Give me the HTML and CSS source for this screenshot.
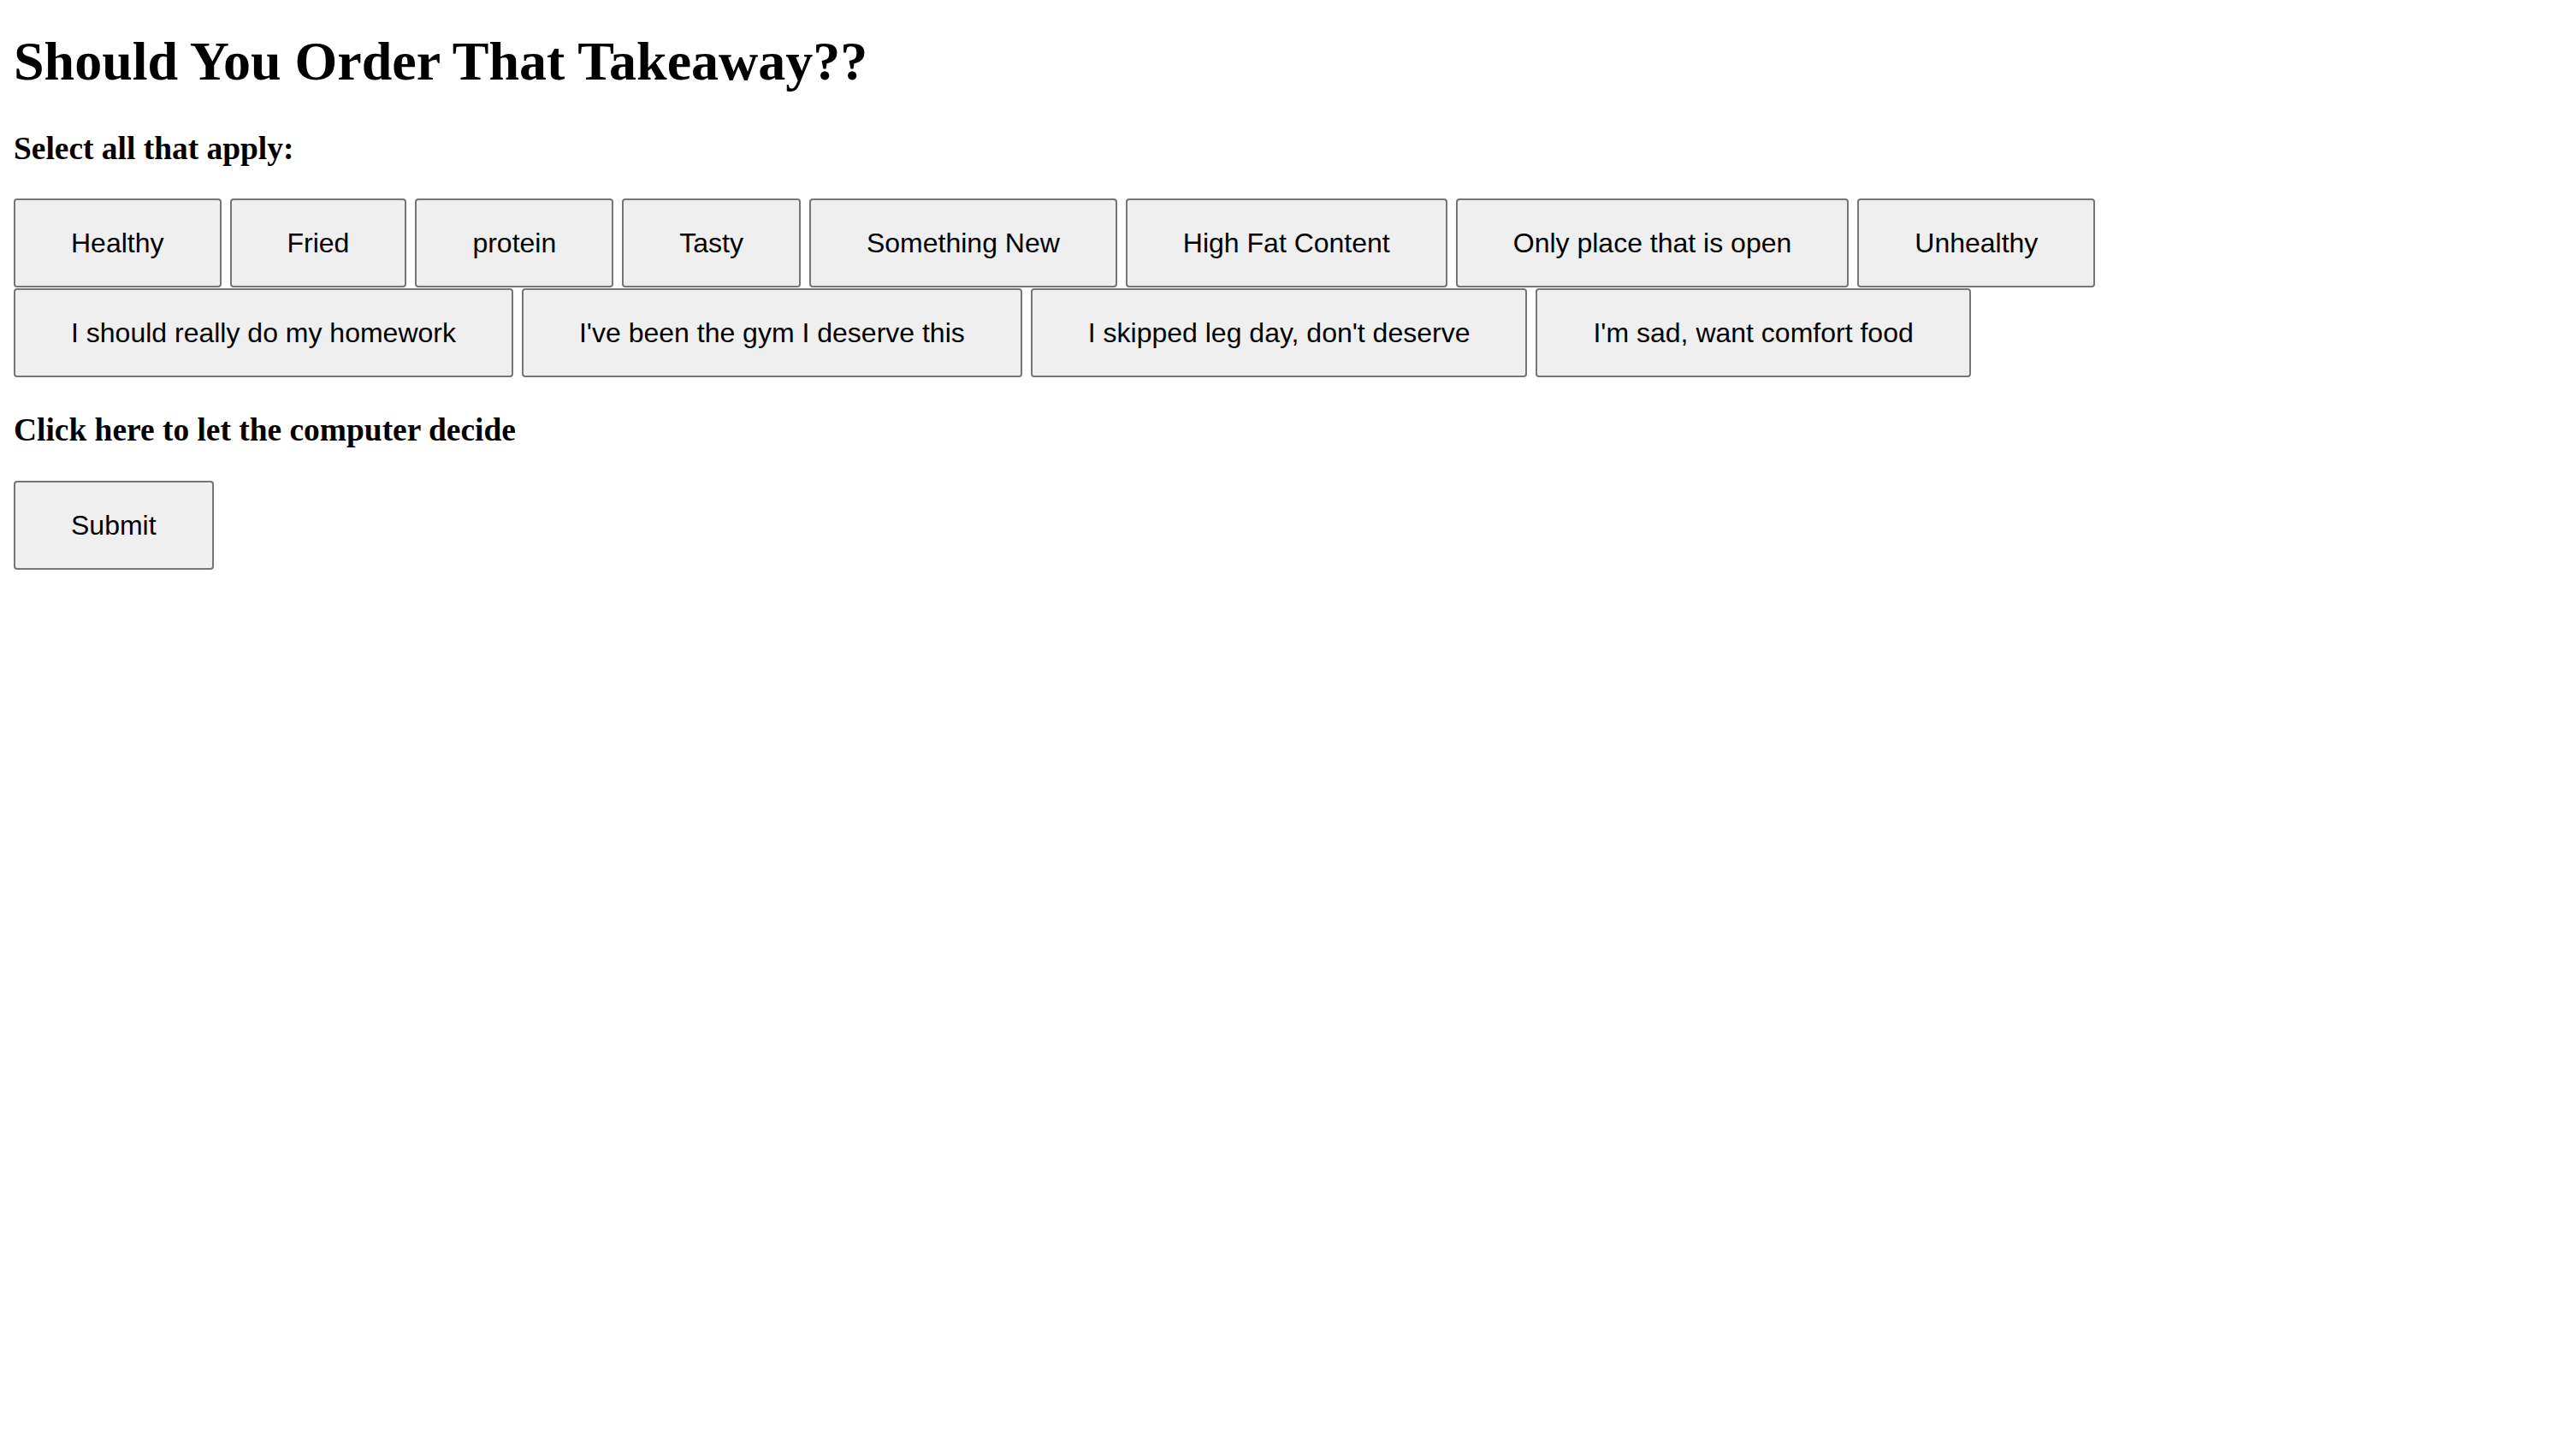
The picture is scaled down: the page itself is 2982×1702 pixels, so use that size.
FILE: index.html
```html
<!DOCTYPE html>
<html lang="en">
<head>
<meta charset="utf-8">
<title>Should You Order That Takeaway??</title>
<link rel="stylesheet" href="styles.css">
</head>
<body>
<h1 class="title">Should You Order That Takeaway??</h1>
<h3 class="prompt">Select all that apply:</h3>
<div class="options">
  <button class="btn">Healthy</button>
  <button class="btn">Fried</button>
  <button class="btn">protein</button>
  <button class="btn">Tasty</button>
  <button class="btn">Something New</button>
  <button class="btn">High Fat Content</button>
  <button class="btn">Only place that is open</button>
  <button class="btn">Unhealthy</button>
  <button class="btn">I should really do my homework</button>
  <button class="btn">I've been the gym I deserve this</button>
  <button class="btn">I skipped leg day, don't deserve</button>
  <button class="btn">I'm sad, want comfort food</button>
</div>
<h3 class="prompt prompt-decide">Click here to let the computer decide</h3>
<div class="actions">
  <button class="btn">Submit</button>
</div>
</body>
</html>
```

FILE: styles.css
```css
html {
  background: #ffffff;
}

body {
  margin: 0 16px 16px;
  padding: 0;
  font-family: "Liberation Serif", "Times New Roman", serif;
  font-size: 32px;
  color: #000000;
}

.title {
  font-size: 64px;
  font-weight: bold;
  line-height: normal;
  margin: 35px 0 42.88px;
}

.prompt {
  font-size: 37.44px;
  font-weight: bold;
  line-height: normal;
  margin: 37.44px 0;
}

.prompt-decide {
  margin-top: 40px;
}

.options {
  display: flex;
  flex-wrap: wrap;
  column-gap: 10px;
  row-gap: 1px;
  align-items: flex-start;
}

.actions {
  display: flex;
}

.btn {
  font-family: "Liberation Sans", Arial, sans-serif;
  font-size: 32px;
  line-height: 36px;
  color: #000000;
  background: #efefef;
  border: 2px solid #767676;
  border-radius: 4px;
  padding: 32px 65px;
  margin: 0;
  white-space: nowrap;
}
```
